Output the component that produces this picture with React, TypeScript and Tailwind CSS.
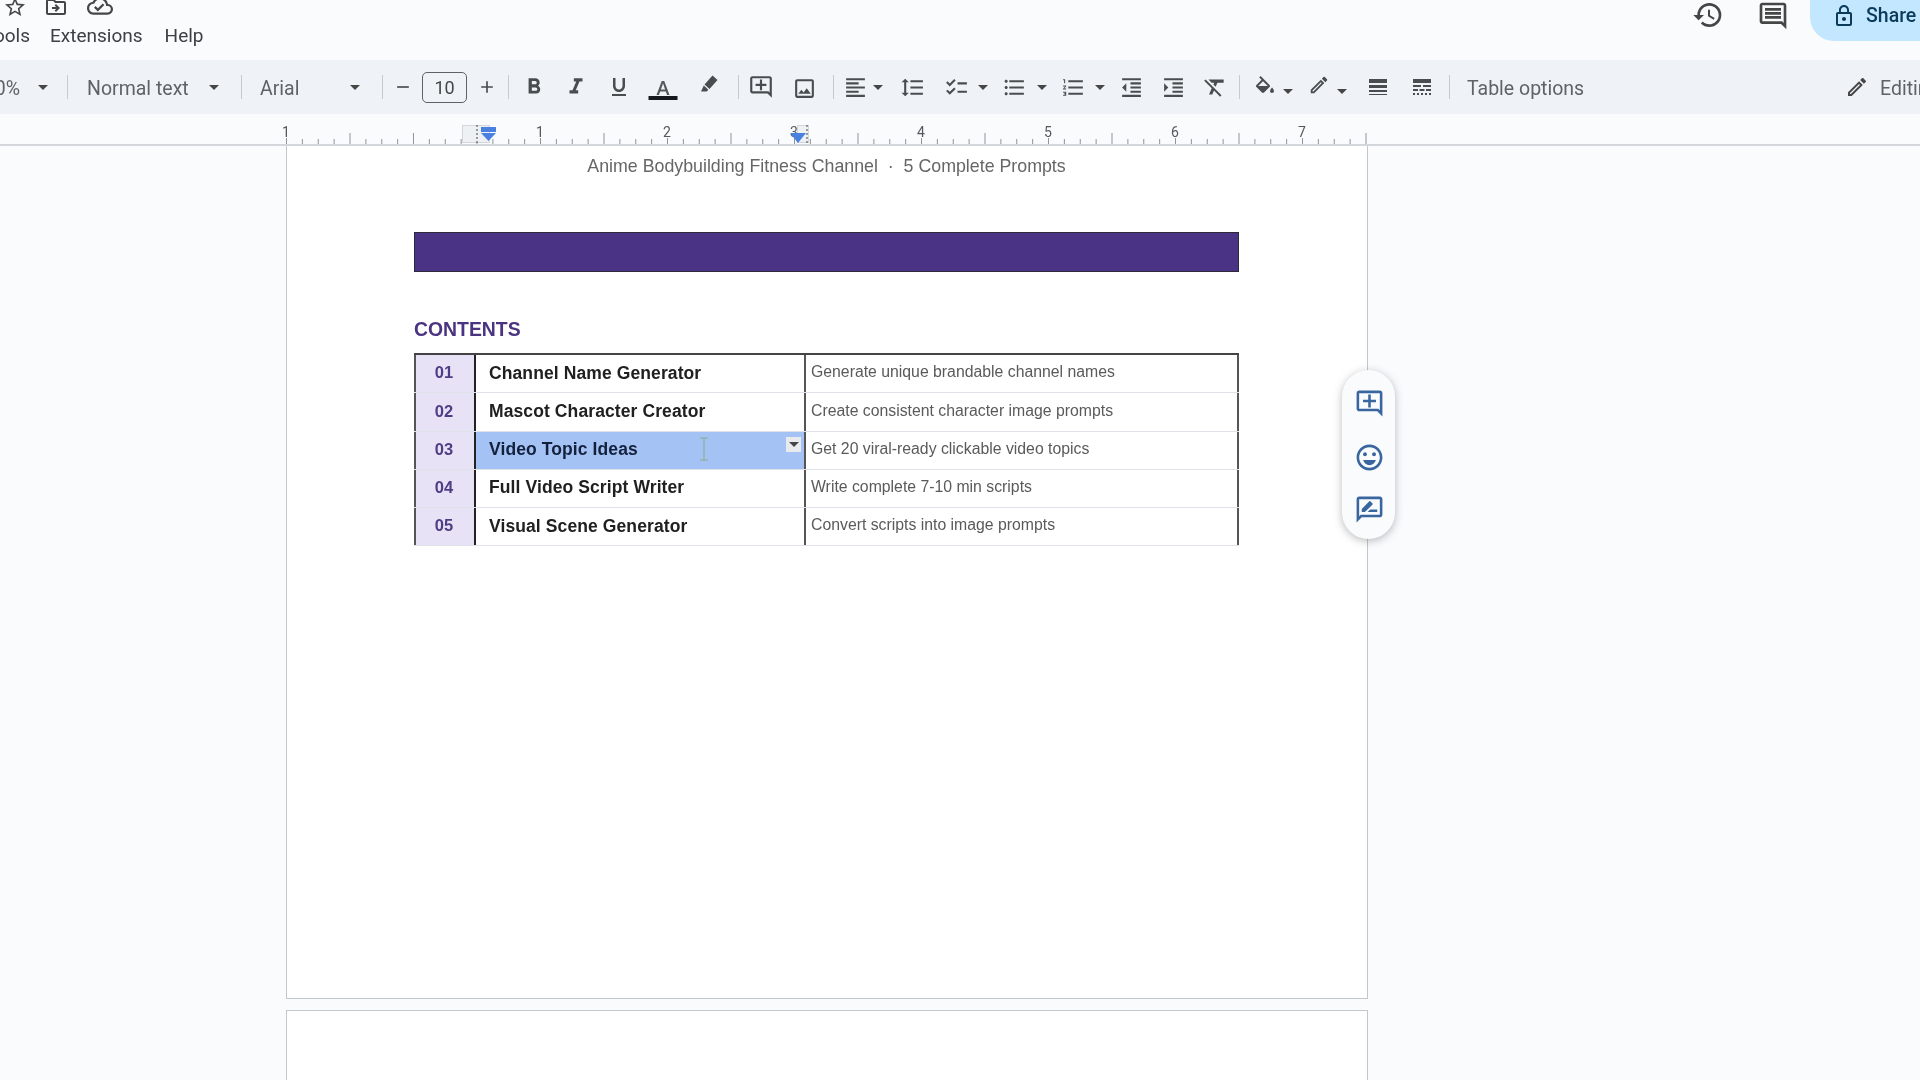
import React from "react";
import {
  MdStarBorder, MdOutlineDriveFileMove, MdOutlineCloudDone, MdHistory, MdOutlineComment, MdLockOutline,
  MdFormatBold, MdFormatItalic, MdFormatUnderlined, MdOutlineAddComment, MdOutlineImage, MdFormatAlignLeft,
  MdFormatLineSpacing, MdChecklist, MdFormatListBulleted, MdFormatListNumbered, MdFormatIndentDecrease,
  MdFormatIndentIncrease, MdFormatClear, MdOutlineEdit, MdLineWeight, MdLineStyle, MdAdd, MdRemove,
  MdOutlineEmojiEmotions, MdOutlineRateReview,
} from "react-icons/md";

const Caret = ({ className = "" }: { className?: string }) => (
  <svg viewBox="0 0 10 5" className={"w-[10px] h-[5px] shrink-0 fill-[#444746] " + className}>
    <polygon points="0,0 10,0 5,5" />
  </svg>
);
const Sep = ({ className = "" }: { className?: string }) => (
  <div className={"w-px h-[24px] bg-[#c7cacc] shrink-0 " + className} />
);
const Cell = ({ className = "", children }: { className?: string; children: React.ReactNode }) => (
  <div className={"w-[20px] h-[20px] flex items-center justify-center shrink-0 text-[#4a4d4f] " + className}>{children}</div>
);

function Ruler() {
  const ticks: React.ReactNode[] = [];
  for (let i = 0; i <= 68; i++) {
    const x = 286.5 + i * 15.875;
    const long = i % 4 === 0;
    ticks.push(<line key={i} x1={x} x2={x} y1={long ? 19 : 25} y2={30} stroke="#8f959a" strokeWidth="1" />);
  }
  const labels: [number, string][] = [[286, "1"], [540, "1"], [667, "2"], [921, "4"], [1048, "5"], [1175, "6"], [1302, "7"]];
  return (
    <svg viewBox="0 0 1920 30" className="w-[1920px] h-[30px] shrink-0 block">
      {ticks}
      {labels.map(([x, t], i) => (
        <g key={i}>
          <rect x={x - 6} y={10} width={12} height={14} fill="#f9fbfd" />
          <text x={x} y={23} textAnchor="middle" fontFamily="Roboto, sans-serif" fontSize="14" fill="#55585a">{t}</text>
        </g>
      ))}
      <text x={794} y={23} textAnchor="middle" fontFamily="Roboto, sans-serif" fontSize="14" fill="#55585a">3</text>
      <rect x={462.5} y={11.5} width={27} height={17} fill="#eef1f4" stroke="#d4d7da" />
      <line x1={477} x2={477} y1={11} y2={30} stroke="#444" strokeDasharray="2 2" />
      <rect x={481} y={13} width={15} height={5} fill="#4a80e0" />
      <polygon points="481,19 496,19 488.5,27" fill="#4a80e0" />
      <rect x={797.5} y={11.5} width={11} height={17} fill="#eef1f4" stroke="#d4d7da" />
      <line x1={807} x2={807} y1={11} y2={30} stroke="#444" strokeDasharray="2 2" />
      <polygon points="790,19 806,19 798,29" fill="#4a80e0" />
    </svg>
  );
}

const rows = [
  ["01", "Channel Name Generator", "Generate unique brandable channel names"],
  ["02", "Mascot Character Creator", "Create consistent character image prompts"],
  ["03", "Video Topic Ideas", "Get 20 viral-ready clickable video topics"],
  ["04", "Full Video Script Writer", "Write complete 7-10 min scripts"],
  ["05", "Visual Scene Generator", "Convert scripts into image prompts"],
];

export default function App() {
  return (
    <div className="relative w-[1920px] h-[1080px] overflow-hidden bg-[#f9fbfd] flex flex-col font-['Roboto',sans-serif] blur-[0.4px]">
      {/* Header */}
      <div className="h-[60px] shrink-0 flex justify-between">
        <div className="flex flex-col">
          <div className="h-[16px] flex items-end text-[#444746] mt-[3px]">
            <MdStarBorder className="w-[24px] h-[24px] ml-[3px] shrink-0" />
            <MdOutlineDriveFileMove className="w-[24px] h-[24px] ml-[17px] shrink-0" />
            <MdOutlineCloudDone className="w-[26px] h-[26px] ml-[19px] shrink-0" />
          </div>
          <div className="flex items-center h-[24px] mt-[5px] text-[19px] text-[#3c4043] w-[300px] overflow-hidden">
            <div className="w-[30px] flex justify-end overflow-hidden shrink-0"><span>Tools</span></div>
            <span className="ml-[20px]">Extensions</span>
            <span className="ml-[22px]">Help</span>
          </div>
        </div>
        <div className="flex items-start">
          <MdHistory className="w-[32px] h-[32px] mt-[-1px] text-[#444746] shrink-0" />
          <MdOutlineComment className="w-[32px] h-[32px] ml-[33px] text-[#444746] shrink-0" />
          <div className="w-[110px] h-[41px] ml-[21px] bg-[#c2e7ff] rounded-bl-[24px] flex items-center pl-[22px] pb-[10px] text-[#0b3a5a] text-[19.5px] font-medium shrink-0 overflow-hidden">
            <MdLockOutline className="w-[24px] h-[24px] shrink-0" />
            <span className="ml-[10px]">Share</span>
          </div>
        </div>
      </div>

      {/* Toolbar */}
      <div className="h-[54px] shrink-0 bg-[#eff3f7] flex items-center text-[19.5px] text-[#5f6368] overflow-hidden">
        <div className="w-[20px] flex justify-end overflow-hidden shrink-0 pt-[3px]"><span>100%</span></div>
        <Caret className="ml-[18px]" />
        <Sep className="ml-[19px]" />
        <span className="ml-[19px] w-[103px] shrink-0 whitespace-nowrap pt-[3px]">Normal text</span>
        <Caret className="ml-[19px]" />
        <Sep className="ml-[22px]" />
        <span className="ml-[18px] w-[72px] shrink-0 pt-[3px]">Arial</span>
        <Caret className="ml-[18px]" />
        <Sep className="ml-[22px]" />
        <Cell className="ml-[10px]"><MdRemove className="w-[20px] h-[20px]" /></Cell>
        <div className="ml-[9px] w-[45px] h-[31px] border border-[#5f6368] rounded-[5px] flex items-center justify-center shrink-0 text-[18px] text-[#444746]">10</div>
        <Cell className="ml-[10px]"><MdAdd className="w-[22px] h-[22px]" /></Cell>
        <Sep className="ml-[11px]" />
        <Cell className="ml-[15px]"><MdFormatBold className="w-[26px] h-[26px] shrink-0" /></Cell>
        <Cell className="ml-[22px]"><MdFormatItalic className="w-[26px] h-[26px] shrink-0" /></Cell>
        <Cell className="ml-[23px]"><MdFormatUnderlined className="w-[24px] h-[24px] shrink-0" /></Cell>
        <Cell className="ml-[24px] mt-[8px]">
          <svg viewBox="-3 3 30 20" className="w-[30px] h-[20px] shrink-0 overflow-visible">
            <path fill="#55585a" d="M5.49 17h2.42l1.27-3.58h5.65L16.09 17h2.42L13.25 3h-2.5L5.49 17zm4.42-5.61 2.03-5.79h.12l2.03 5.79H9.91z" />
            <rect x="-2.5" y="18" width="29" height="4" fill="#15181c" />
          </svg>
        </Cell>
        <Cell className="ml-[26px] -mt-[6px]">
          <svg viewBox="0 0 20 20" className="w-[20px] h-[20px] shrink-0 fill-[#4a4d4f]">
            <path d="M13.5 1.5 18.5 6 10.5 15 5.5 10.5Z" />
            <path d="M4.8 11.6 9.4 15.8 7.6 17.6 2 17.6Z" />
          </svg>
        </Cell>
        <Sep className="ml-[19px]" />
        <Cell className="ml-[12px]"><MdOutlineAddComment className="w-[26px] h-[26px] shrink-0" /></Cell>
        <Cell className="ml-[23px] mt-[2px]"><MdOutlineImage className="w-[25px] h-[25px] shrink-0" /></Cell>
        <Sep className="ml-[19px]" />
        <Cell className="ml-[11px]"><MdFormatAlignLeft className="w-[25px] h-[25px] shrink-0" /></Cell>
        <Caret className="ml-[8px]" />
        <Cell className="ml-[19px]"><MdFormatLineSpacing className="w-[25px] h-[25px] shrink-0" /></Cell>
        <Cell className="ml-[24px]"><MdChecklist className="w-[25px] h-[25px] shrink-0" /></Cell>
        <Caret className="ml-[12px]" />
        <Cell className="ml-[16px]"><MdFormatListBulleted className="w-[25px] h-[25px] shrink-0" /></Cell>
        <Caret className="ml-[13px]" />
        <Cell className="ml-[16px]"><MdFormatListNumbered className="w-[25px] h-[25px] shrink-0" /></Cell>
        <Caret className="ml-[12px]" />
        <Cell className="ml-[16px]"><MdFormatIndentDecrease className="w-[25px] h-[25px] shrink-0" /></Cell>
        <Cell className="ml-[22px]"><MdFormatIndentIncrease className="w-[25px] h-[25px] shrink-0" /></Cell>
        <Cell className="ml-[22px]"><MdFormatClear className="w-[26px] h-[26px] shrink-0" /></Cell>
        <Sep className="ml-[14px]" />
        <Cell className="ml-[15px] -mt-[4px]">
          <svg viewBox="0 0 24 18" className="w-[24px] h-[18px] shrink-0 fill-[#4a4d4f]">
            <path d="M16.56 8.94 7.62 0 6.21 1.41l2.38 2.38-5.15 5.15c-.59.59-.59 1.54 0 2.12l5.5 5.5c.29.29.68.44 1.06.44s.77-.15 1.06-.44l5.5-5.5c.59-.58.59-1.53 0-2.12zM5.21 10 10 5.21 14.79 10H5.21zM19 11.5s-2 2.17-2 3.5c0 1.1.9 2 2 2s2-.9 2-2c0-1.33-2-3.5-2-3.5z" />
          </svg>
        </Cell>
        <Caret className="ml-[8px] mt-[8px]" />
        <Cell className="ml-[16px] -mt-[4px]"><MdOutlineEdit className="w-[22px] h-[22px] shrink-0" /></Cell>
        <Caret className="ml-[8px] mt-[8px]" />
        <Cell className="ml-[21px]"><MdLineWeight className="w-[24px] h-[24px] shrink-0" /></Cell>
        <Cell className="ml-[24px]"><MdLineStyle className="w-[24px] h-[24px] shrink-0" /></Cell>
        <Sep className="ml-[17px]" />
        <span className="ml-[17px] shrink-0 whitespace-nowrap pt-[3px]">Table options</span>
        <div className="ml-auto w-[75px] flex items-center overflow-hidden shrink-0">
          <MdOutlineEdit className="w-[24px] h-[24px] shrink-0 text-[#444746]" />
          <span className="ml-[11px] whitespace-nowrap pt-[3px]">Editing</span>
        </div>
      </div>

      {/* Ruler */}
      <Ruler />
      <div className="h-[2px] shrink-0 bg-[#d3d7db]" />

      {/* Document canvas */}
      <div className="flex-1 flex flex-col pl-[286px] font-['Liberation_Sans',sans-serif]">
        <div className="w-[1082px] h-[853px] shrink-0 bg-white border-x border-b border-[#c4c7c9] pl-[127px]">
          <div className="w-[825px]">
            <div className="mt-[8px] h-[24px] flex items-center justify-center text-[17.8px] text-[#666666] whitespace-pre">Anime Bodybuilding Fitness Channel  ·  5 Complete Prompts</div>
            <div className="mt-[54px] h-[40px] bg-[#4a3284] border border-[#2a2a3a]" />
            <div className="mt-[46px] h-[24px] flex items-center text-[19.4px] font-bold text-[#4a3380]">CONTENTS</div>
            <div className="mt-[11px] border-t-2 border-[#444]">
              {rows.map(([n, name, desc], i) => (
                <div key={n} className="grid grid-cols-[62px_330px_433px] h-[38.3px] border-b border-[#e0e2ea]">
                  <div className="bg-[#e8e2f6] border-l-2 border-r-2 border-l-[#555] border-r-[#222] flex items-center justify-center pb-[2px] pr-[2px] text-[16.5px] font-bold text-[#4f3d85]">{n}</div>
                  <div className={"relative border-r-2 border-[#555] flex items-center pl-[13px] pb-[2px] text-[17.5px] font-bold tracking-[0.1px] " + (i === 2 ? "bg-[#a4c2f4] text-[#14213d]" : "text-[#202020]")}>
                    {name}
                    {i === 2 && (
                      <>
                        <svg viewBox="0 0 12 24" className="absolute left-[222px] top-[4px] w-[12px] h-[26px] fill-none stroke-[#8fa88f]" strokeWidth="1">
                          <path d="M2 1h8M6 1v22M2 23h8" />
                        </svg>
                        <div className="absolute right-[3px] top-[5px] w-[15px] h-[15px] bg-[#e8eaed] flex items-center justify-center">
                          <svg viewBox="0 0 10 5" className="w-[10px] h-[5px] fill-[#444]"><polygon points="0,0 10,0 5,5" /></svg>
                        </div>
                      </>
                    )}
                  </div>
                  <div className="border-r-2 border-[#555] flex items-center pl-[5px] pb-[3px] text-[15.8px] text-[#5a5a5a]">{desc}</div>
                </div>
              ))}
            </div>
          </div>
        </div>
        <div className="w-[1082px] flex-1 mt-[11px] bg-white border-x border-t border-[#c4c7c9]" />
      </div>

      {/* Floating side actions */}
      <div className="absolute left-[1342px] top-[370px] w-[53px] h-[169px] rounded-full bg-[#f9fbfd] shadow-[0_2px_8px_rgba(60,64,67,0.35)] flex flex-col items-center pt-[18px] pl-[1px] text-[#3a669f]">
        <MdOutlineAddComment className="w-[31px] h-[31px] shrink-0" />
        <MdOutlineEmojiEmotions className="w-[31px] h-[31px] mt-[23px] shrink-0" />
        <MdOutlineRateReview className="w-[31px] h-[31px] mt-[21px] shrink-0" />
      </div>
    </div>
  );
}
